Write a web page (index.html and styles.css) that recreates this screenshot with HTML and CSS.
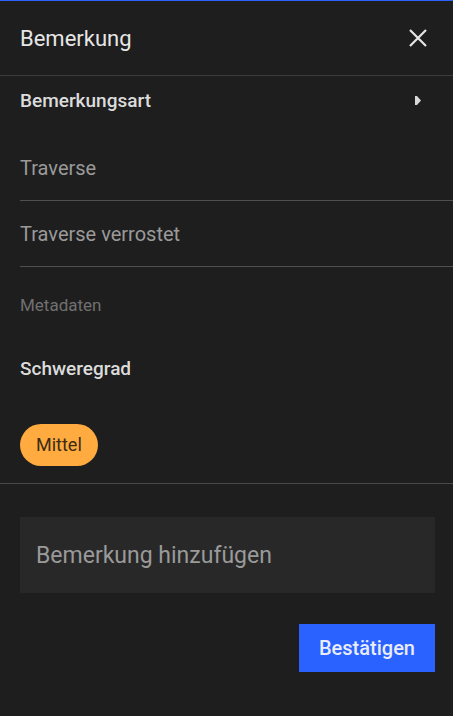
FILE: index.html
```html
<!DOCTYPE html>
<html lang="de">
<head>
  <meta charset="UTF-8">
  <meta name="viewport" content="width=device-width, initial-scale=1.0">
  <title>Bemerkung</title>
  <link rel="stylesheet" href="styles.css">
</head>
<body>
  <div class="panel">
    <div class="header">
      <span class="title">Bemerkung</span>
      <svg class="close" width="20" height="20" viewBox="0 0 20 20">
        <path d="M2 2 L18 18 M18 2 L2 18" stroke="#e6e6e6" stroke-width="2.2" fill="none"/>
      </svg>
    </div>
    <div class="section">
      <div class="type-row">
        <span>Bemerkungsart</span>
        <svg width="6" height="9" viewBox="0 0 6 9"><path d="M0 0 L2 0 L6 4.5 L2 9 L0 9 Z" fill="#d8d8d8"/></svg>
      </div>
      <div class="option first">Traverse</div>
      <div class="option">Traverse verrostet</div>
      <div class="meta">Metadaten</div>
      <div class="label">Schweregrad</div>
      <div class="chips">
        <span class="chip">Mittel</span>
      </div>
    </div>
    <div class="footer">
      <div class="comment">Bemerkung hinzufügen</div>
      <div class="actions">
        <button class="confirm">Bestätigen</button>
      </div>
    </div>
  </div>
</body>
</html>
```
FILE: styles.css
```css
html, body {
  margin: 0;
  background-color: #1e1e1e;
}

.panel {
  font-family: Roboto, "Liberation Sans", sans-serif;
  border-top: 1px solid #2962ff;
  min-height: 715px;
}

.header {
  display: flex;
  align-items: center;
  justify-content: space-between;
  height: 74px;
  padding: 0 25px 0 20px;
  border-bottom: 1px solid #3c3c3c;
}

.title {
  font-size: 22px;
  color: #e6e6e6;
}

.close {
  display: block;
}

.section {
  padding-left: 20px;
  border-bottom: 1px solid #4a4a4a;
}

.type-row {
  display: flex;
  align-items: center;
  justify-content: space-between;
  height: 48px;
  padding-right: 32px;
  font-size: 19px;
  font-weight: 500;
  color: #dcdcdc;
}

.option {
  display: flex;
  align-items: center;
  height: 65px;
  font-size: 20px;
  color: #9a9a9a;
  border-bottom: 1px solid #505050;
}

.option.first {
  margin-top: 11px;
}

.meta {
  display: flex;
  align-items: center;
  height: 76px;
  font-size: 17px;
  color: #707070;
}

.label {
  display: flex;
  align-items: center;
  height: 50px;
  font-size: 19px;
  font-weight: 500;
  color: #dcdcdc;
}

.chips {
  padding: 31px 0 17px;
}

.chip {
  display: inline-block;
  padding: 0 16px;
  height: 42px;
  line-height: 42px;
  border-radius: 21px;
  background-color: #ffab40;
  color: #3b2c12;
  font-size: 18px;
}

.footer {
  padding: 33px 18px 0 20px;
}

.comment {
  height: 76px;
  display: flex;
  align-items: center;
  padding-left: 16px;
  background-color: #282828;
  font-size: 23px;
  color: #9a9a9a;
}

.actions {
  display: flex;
  justify-content: flex-end;
  padding-top: 31px;
}

.confirm {
  width: 136px;
  height: 48px;
  border: none;
  background-color: #2962ff;
  color: #e8ecfb;
  font-family: Roboto, "Liberation Sans", sans-serif;
  font-size: 20px;
  font-weight: 500;
}
```
